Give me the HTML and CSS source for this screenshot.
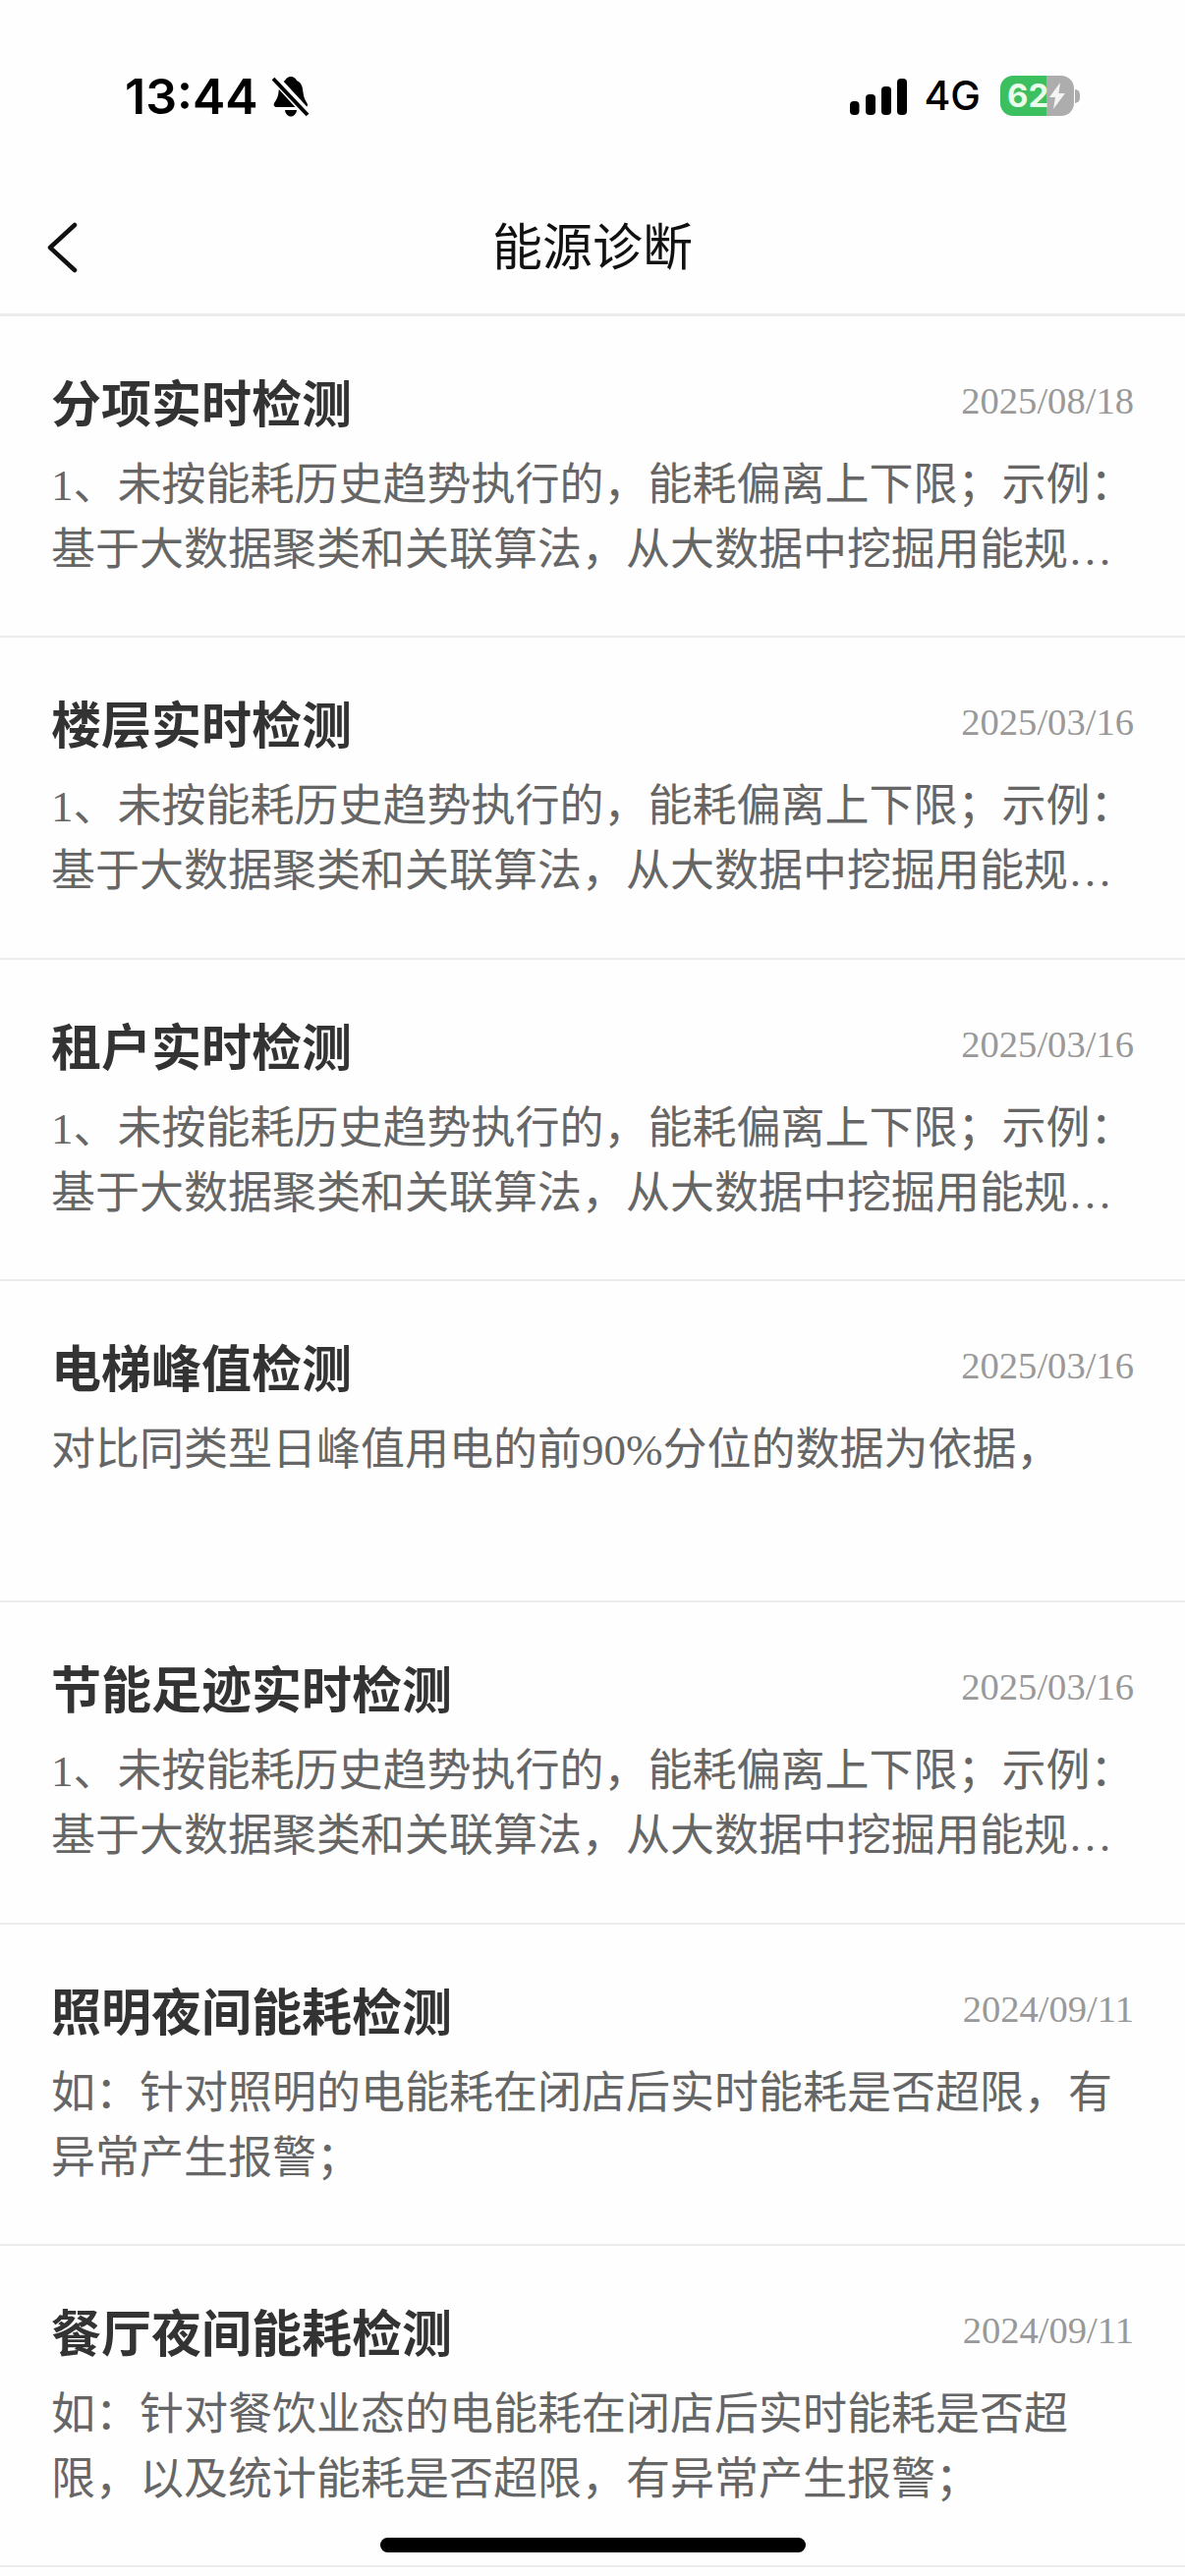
FILE: index.html
```html
<!DOCTYPE html>
<html lang="zh-CN">
<head>
<meta charset="utf-8">
<title>能源诊断</title>
<link rel="stylesheet" href="styles.css">
</head>
<body>
<div class="screen">
  <header class="status">
    <div class="status-left">
      <span class="time">13:44</span>
      <svg class="bell" viewBox="0 0 38 42" width="38" height="42">
        <path d="M19 1c3 0 5 2 6 4 5 2 6 7 6.500 12 .5 5 2 8 4 11 1 2 .5 4-2 4H5c-3 0-4-2-3-4 2-3 4-6 4.500-11C7 12 8 7 13 5c1-2 3-4 6-4z"/>
        <path d="M13 35h12c-.5 4-3 6.500-6 6.500s-5.500-2.500-6-6.500z"/>
        <path class="bell-gap" d="M1 1l36 39"/>
        <path class="bell-slash" d="M1 3l35 37"/>
      </svg>
    </div>
    <div class="status-right">
      <svg class="signal" viewBox="0 0 58 37" width="58" height="37">
        <rect x="0" y="23" width="9.500" height="14" rx="4"/>
        <rect x="16" y="16" width="10" height="21" rx="4"/>
        <rect x="32" y="8" width="10" height="29" rx="4"/>
        <rect x="48" y="0" width="10" height="37" rx="4"/>
      </svg>
      <span class="net">4G</span>
      <div class="battery">
        <div class="battery-body">
          <span class="battery-num">62</span>
          <svg class="bolt" viewBox="0 0 16 27" width="16" height="27">
            <path d="M11 0L0 15h6l-2 12L16 11H9.500z"/>
          </svg>
        </div>
        <span class="battery-nub"></span>
      </div>
    </div>
  </header>

  <nav class="nav">
    <svg class="back" viewBox="0 0 32 52" width="32" height="52">
      <path d="M29 3L4 26l25 23"/>
    </svg>
    <h1 class="nav-title">能源诊断</h1>
  </nav>

  <ul class="list">
    <li class="row">
      <div class="row-head"><h2 class="row-title">分项实时检测</h2><time class="row-date">2025/08/18</time></div>
      <p class="row-desc">1、未按能耗历史趋势执行的，能耗偏离上下限<span class="mark">；</span>示例<span class="mark">：</span>基于大数据聚类和关联算法，从大数据中挖掘用能规律，</p>
    </li>
    <li class="row">
      <div class="row-head"><h2 class="row-title">楼层实时检测</h2><time class="row-date">2025/03/16</time></div>
      <p class="row-desc">1、未按能耗历史趋势执行的，能耗偏离上下限<span class="mark">；</span>示例<span class="mark">：</span>基于大数据聚类和关联算法，从大数据中挖掘用能规律，</p>
    </li>
    <li class="row">
      <div class="row-head"><h2 class="row-title">租户实时检测</h2><time class="row-date">2025/03/16</time></div>
      <p class="row-desc">1、未按能耗历史趋势执行的，能耗偏离上下限<span class="mark">；</span>示例<span class="mark">：</span>基于大数据聚类和关联算法，从大数据中挖掘用能规律，</p>
    </li>
    <li class="row">
      <div class="row-head"><h2 class="row-title">电梯峰值检测</h2><time class="row-date">2025/03/16</time></div>
      <p class="row-desc">对比同类型日峰值用电的前90%分位的数据为依据，</p>
    </li>
    <li class="row">
      <div class="row-head"><h2 class="row-title">节能足迹实时检测</h2><time class="row-date">2025/03/16</time></div>
      <p class="row-desc">1、未按能耗历史趋势执行的，能耗偏离上下限<span class="mark">；</span>示例<span class="mark">：</span>基于大数据聚类和关联算法，从大数据中挖掘用能规律，</p>
    </li>
    <li class="row">
      <div class="row-head"><h2 class="row-title">照明夜间能耗检测</h2><time class="row-date">2024/09/11</time></div>
      <p class="row-desc">如<span class="mark">：</span>针对照明的电能耗在闭店后实时能耗是否超限，有异常产生报警<span class="mark">；</span></p>
    </li>
    <li class="row">
      <div class="row-head"><h2 class="row-title">餐厅夜间能耗检测</h2><time class="row-date">2024/09/11</time></div>
      <p class="row-desc">如<span class="mark">：</span>针对餐饮业态的电能耗在闭店后实时能耗是否超限，以及统计能耗是否超限，有异常产生报警<span class="mark">；</span></p>
    </li>
  </ul>

  <div class="home-bar"></div>
</div>
</body>
</html>
```
FILE: styles.css
```css
* { box-sizing: border-box; }
html, body { margin: 0; padding: 0; background: #fefefe; }
.screen {
  position: relative;
  width: 1206px;
  height: 2622px;
  overflow: hidden;
  background: #fefefe;
  font-family: "Liberation Serif", "Noto Sans CJK SC", serif;
}
.status {
  height: 160px;
  display: flex;
  justify-content: space-between;
  align-items: flex-start;
  padding: 77px 107px 0 127px;
  font-family: Inter, "Liberation Sans", sans-serif;
  color: #000;
}
.status-left { display: flex; align-items: center; gap: 14px; height: 42px; }
.time { font-size: 50px; font-weight: 600; line-height: 42px; }
.bell { display: block; fill: #000; }
.bell-gap { fill: none; stroke: #fefefe; stroke-width: 9px; }
.bell-slash { fill: none; stroke: #000; stroke-width: 4px; }
.status-right { display: flex; align-items: center; gap: 20px; height: 41px; }
.signal { display: block; fill: #000; margin: 2px -3px 0 0; }
.net { font-size: 41px; font-weight: 500; line-height: 41px; }
.battery { display: flex; align-items: center; gap: 1px; }
.battery-body {
  position: relative;
  width: 75px;
  height: 41px;
  border-radius: 13px;
  background: linear-gradient(to right, #3cbf5f 0, #3cbf5f 47px, #adadad 47px, #adadad 100%);
  color: #e9fbe9;
  font-size: 33px;
  font-weight: 700;
  line-height: 41px;
  padding-left: 7px;
}
.battery-num { display: block; }
.bolt { position: absolute; left: 50px; top: 7px; fill: #f4f4f4; }
.battery-nub {
  width: 5px;
  height: 14px;
  background: #adadad;
  border-radius: 0 6px 6px 0;
}
.nav {
  position: relative;
  height: 162px;
  display: flex;
  align-items: center;
  justify-content: center;
  padding-top: 17px;
  border-bottom: 3px solid #ececec;
}
.back {
  position: absolute;
  left: 47px;
  top: 66px;
  fill: none;
  stroke: #111;
  stroke-width: 4.500px;
  stroke-linecap: round;
  stroke-linejoin: round;
}
.nav-title {
  margin: 0;
  font-size: 51px;
  font-weight: 400;
  line-height: 70px;
  color: #111;
  font-family: "Noto Sans CJK SC", sans-serif;
}
.list { margin: 0; padding: 0; list-style: none; }
.row {
  height: 327.330px;
  padding: 51px 52px 0;
  border-bottom: 2px solid #ececec;
}
.row-head { display: flex; justify-content: space-between; align-items: center; height: 70px; }
.row-title {
  margin: 0;
  font-size: 51px;
  font-weight: 700;
  line-height: 70px;
  color: #333;
  font-family: "Noto Sans CJK SC", sans-serif;
}
.row-date { font-size: 38.600px; color: #999; line-height: 70px; }
.row-desc {
  margin: 18px -4px 0 0;
  font-size: 45px;
  line-height: 66px;
  color: #666;
  display: -webkit-box;
  -webkit-box-orient: vertical;
  -webkit-line-clamp: 2;
  overflow: hidden;
}
.mark { font-family: "Noto Sans CJK JP", sans-serif; line-height: 1; }
.home-bar {
  position: absolute;
  left: 387px;
  top: 2583px;
  width: 433px;
  height: 15px;
  border-radius: 8px;
  background: #000;
}
```
